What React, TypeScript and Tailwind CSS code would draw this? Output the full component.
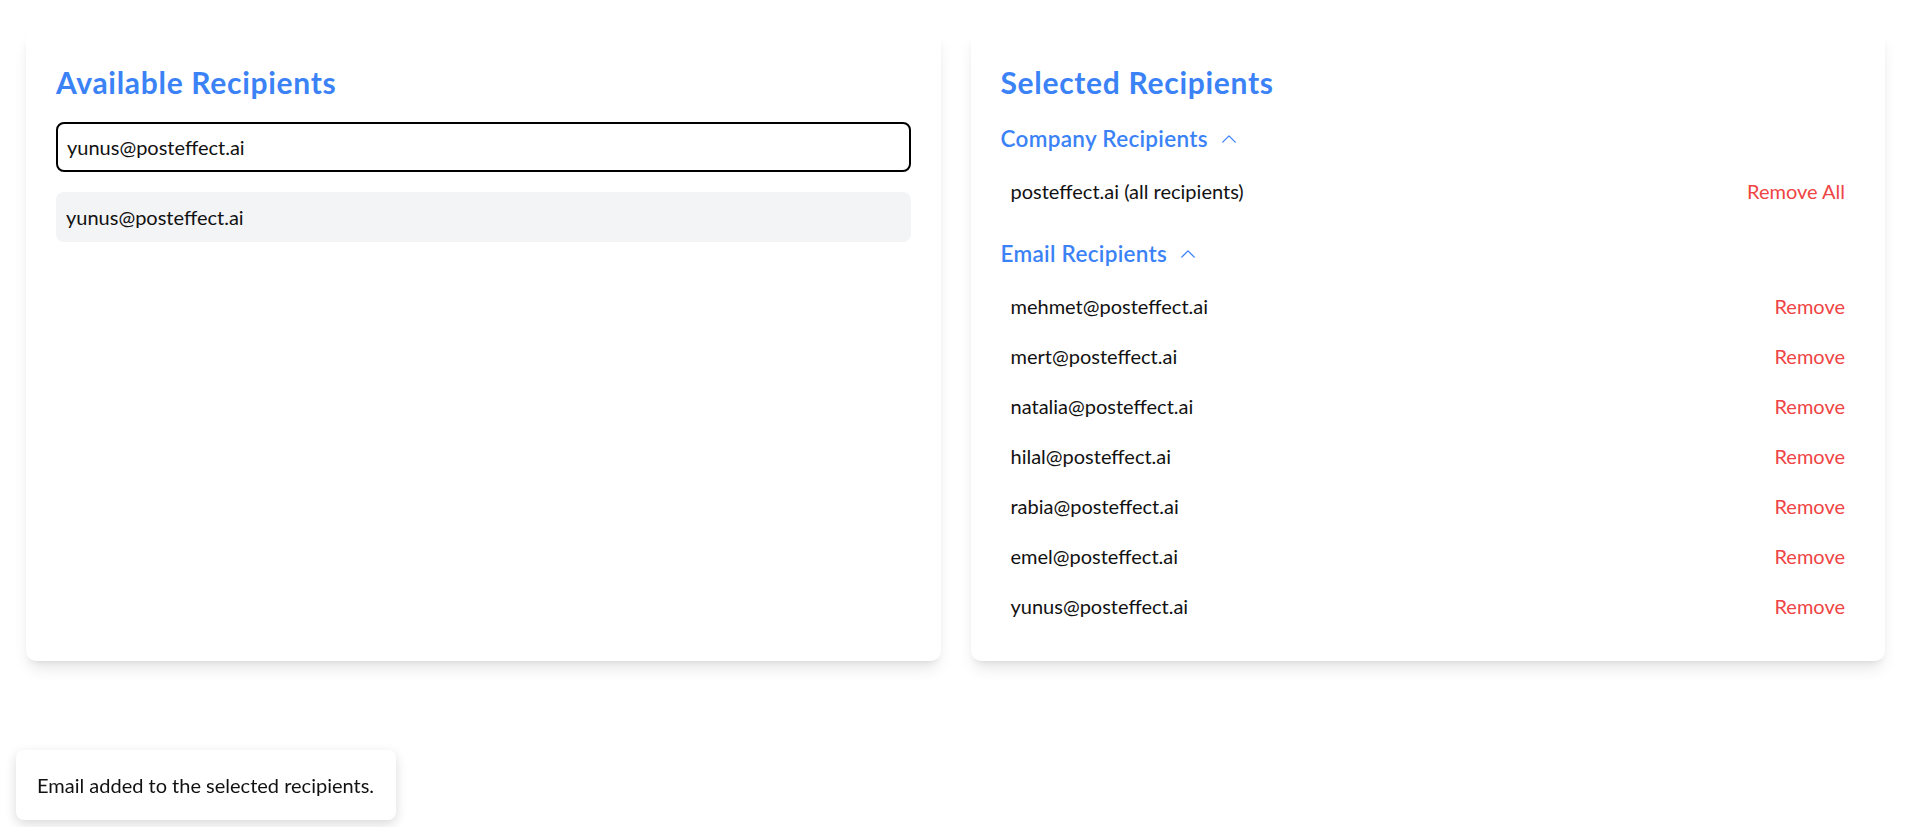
import React from "react";

const emails = [
  "mehmet@posteffect.ai",
  "mert@posteffect.ai",
  "natalia@posteffect.ai",
  "hilal@posteffect.ai",
  "rabia@posteffect.ai",
  "emel@posteffect.ai",
  "yunus@posteffect.ai",
];

function Chevron() {
  return (
    <svg viewBox="0 0 24 24" className="ml-[11px] h-[20px] w-[20px]" fill="none" stroke="currentColor" strokeWidth={1.6} strokeLinecap="round" strokeLinejoin="round">
      <path d="m4.5 15.75 7.5-7.5 7.5 7.5" />
    </svg>
  );
}

const cardShadow = "shadow-[0_10px_15px_-3px_rgba(0,0,0,0.1),0_4px_6px_-4px_rgba(0,0,0,0.1)]";

export default function App() {
  return (
    <div className="relative min-h-screen bg-white font-['Lato',sans-serif] text-[#111]">
      <div className="grid grid-cols-2 gap-[30px] pl-[26px] pr-[24px] pt-[30px]">
        <div className={`rounded-[10px] bg-white p-[30px] ${cardShadow}`}>
          <h2 className="pt-[2px] text-[30px] font-bold leading-[40px] tracking-[0.7px] text-[#3b82f6]">Available Recipients</h2>
          <div className="mt-[20px] flex h-[50px] items-center rounded-[8px] border-2 border-black pl-[9px] text-[20px] leading-[30px]">
            yunus@posteffect.ai
          </div>
          <div className="mt-[20px] flex h-[50px] items-center rounded-[8px] bg-[#f3f4f6] pl-[10px] text-[20px] leading-[30px]">
            yunus@posteffect.ai
          </div>
        </div>
        <div className={`rounded-[10px] bg-white p-[30px] ${cardShadow}`}>
          <h2 className="pt-[2px] text-[30px] font-bold leading-[40px] tracking-[0.7px] text-[#3b82f6]">Selected Recipients</h2>
          <div className="mt-[19px] flex items-center text-[22.5px] font-semibold leading-[35px] tracking-[0.3px] text-[#3b82f6]">
            Company Recipients
            <Chevron />
          </div>
          <div className="mt-[10px] flex items-center justify-between px-[10px] py-[10px] text-[20px] leading-[30px]">
            <span>posteffect.ai (all recipients)</span>
            <span className="text-[#ef4444]">Remove All</span>
          </div>
          <div className="mt-[20px] flex items-center text-[22.5px] font-semibold leading-[35px] tracking-[0.3px] text-[#3b82f6]">
            Email Recipients
            <Chevron />
          </div>
          <div className="mt-[10px] flex flex-col">
            {emails.map((e) => (
              <div key={e} className="flex items-center justify-between px-[10px] py-[10px] text-[20px] leading-[30px]">
                <span>{e}</span>
                <span className="text-[#ef4444]">Remove</span>
              </div>
            ))}
          </div>
        </div>
      </div>
      <div className="fixed bottom-[7px] left-[16px] flex h-[70px] w-[380px] items-center whitespace-nowrap rounded-[8px] bg-white px-[21px] text-[20px] leading-[30px] shadow-[0_4px_12px_rgba(0,0,0,0.15)]">
        Email added to the selected recipients.
      </div>
    </div>
  );
}
